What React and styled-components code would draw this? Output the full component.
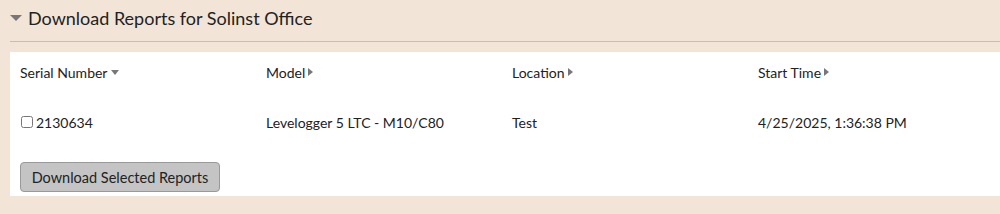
import React, { useState } from "react";
import styled, { createGlobalStyle } from "styled-components";

const GlobalStyle = createGlobalStyle`
  body {
    margin: 0;
    background: #f2e5d7;
    font-family: Lato, "Open Sans", sans-serif;
    color: #222;
  }
`;

//  Styled components
const Page = styled.div`
  padding-left: 10px;
  height: 214px;
  box-sizing: border-box;
`;

const TitleBar = styled.div`
  display: flex;
  align-items: center;
  height: 35px;
  padding-bottom: 6px;
  border-bottom: 1px solid #c4c0b8;
`;

const Caret = styled.span`
  width: 0;
  height: 0;
  border-left: ${p => (p.$small ? 4 : 6)}px solid transparent;
  border-right: ${p => (p.$small ? 4 : 6)}px solid transparent;
  border-top: ${p => (p.$small ? 5 : 6)}px solid #777;
  margin: ${p => (p.$small ? "1px 0 0 4px" : "1px 6px 0 0")};
`;

const SideCaret = styled.span`
  width: 0;
  height: 0;
  border-top: 4px solid transparent;
  border-bottom: 4px solid transparent;
  border-left: 5px solid #777;
  margin-left: 3px;
`;

const Title = styled.h2`
  margin: 0;
  font-size: 18px;
  font-weight: 400;
  color: #222;
`;

const Panel = styled.div`
  margin-top: 10px;
  background: #fff;
  padding: 0 10px;
  height: 144px;
  box-sizing: border-box;
`;

const Row = styled.div`
  display: grid;
  grid-template-columns: repeat(4, 246px);
  align-items: center;
  height: ${p => p.$h}px;
  font-size: 14px;
`;

const Cell = styled.div`
  display: flex;
  align-items: center;
`;

const Box = styled.input`
  width: 12px;
  height: 12px;
  margin: 0 3px 0 1px;
`;

const Button = styled.button`
  display: block;
  margin-top: 10px;
  font-family: Lato, "Open Sans", sans-serif;
  font-size: 14.5px;
  color: #222;
  background: #c4c4c4;
  border: 1px solid #999;
  border-radius: 4px;
  height: 30px;
  width: 200px;
  padding: 0;
`;
//  End Styled Component

const columns = [
  { label: "Serial Number", sort: "down" },
  { label: "Model" },
  { label: "Location" },
  { label: "Start Time" }
];

export default function App() {
  const [checked, setChecked] = useState(false);
  return (
    <Page>
      <GlobalStyle />
      <TitleBar>
        <Caret />
        <Title>Download Reports for Solinst Office</Title>
      </TitleBar>
      <Panel>
        <Row $h={40}>
          {columns.map(c => (
            <Cell key={c.label}>
              {c.label}
              {c.sort === "down" ? <Caret $small /> : <SideCaret />}
            </Cell>
          ))}
        </Row>
        <Row $h={60}>
          <Cell>
            <Box
              type="checkbox"
              checked={checked}
              onChange={e => setChecked(e.target.checked)}
            />
            2130634
          </Cell>
          <Cell>Levelogger 5 LTC - M10/C80</Cell>
          <Cell>Test</Cell>
          <Cell>4/25/2025, 1:36:38 PM</Cell>
        </Row>
        <Button>Download Selected Reports</Button>
      </Panel>
    </Page>
  );
}
